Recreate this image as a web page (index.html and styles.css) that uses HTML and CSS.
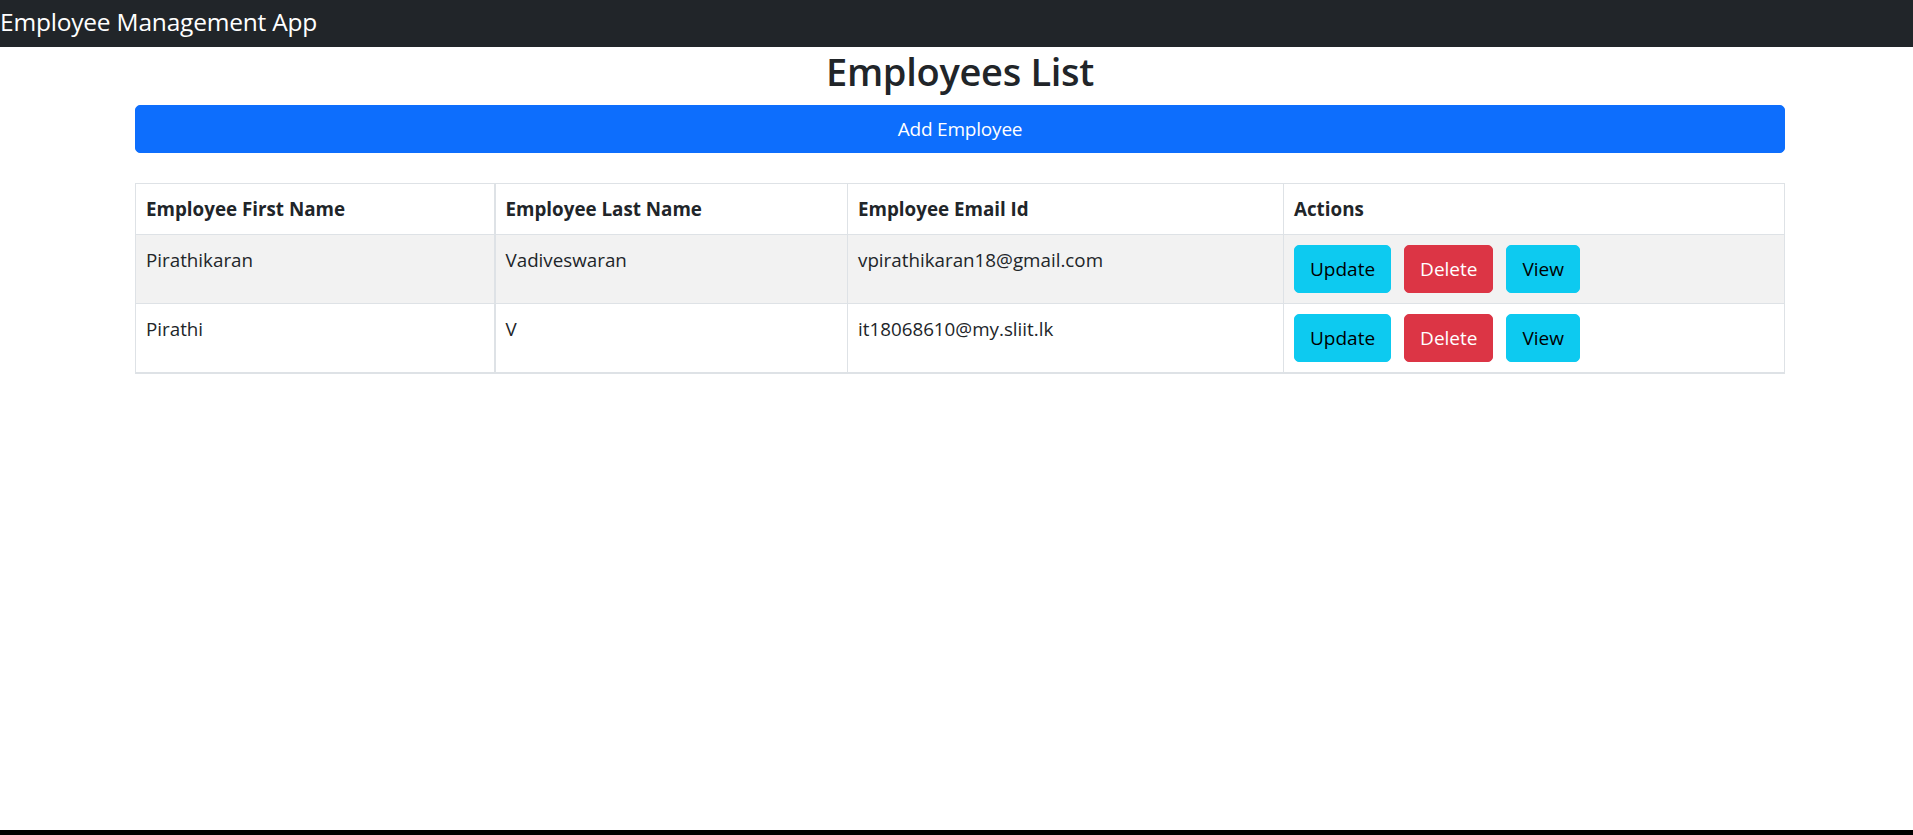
FILE: index.html
```html
<!DOCTYPE html>
<html lang="en">
<head>
<meta charset="utf-8">
<title>Employee Management App</title>
<link rel="stylesheet" href="styles.css">
</head>
<body>
<div class="page">
  <header class="navbar">
    <span class="brand">Employee Management App</span>
  </header>
  <main class="container">
    <h2 class="title">Employees List</h2>
    <button class="btn btn-primary btn-block">Add Employee</button>
    <table class="table">
      <thead>
        <tr>
          <th class="c1">Employee First Name</th>
          <th class="c2">Employee Last Name</th>
          <th class="c3">Employee Email Id</th>
          <th class="c4">Actions</th>
        </tr>
      </thead>
      <tbody>
        <tr class="striped">
          <td class="c1">Pirathikaran</td>
          <td class="c2">Vadiveswaran</td>
          <td class="c3">vpirathikaran18@gmail.com</td>
          <td class="c4">
            <div class="actions">
              <button class="btn btn-info">Update</button>
              <button class="btn btn-danger">Delete</button>
              <button class="btn btn-info">View</button>
            </div>
          </td>
        </tr>
        <tr>
          <td class="c1">Pirathi</td>
          <td class="c2">V</td>
          <td class="c3">it18068610@my.sliit.lk</td>
          <td class="c4">
            <div class="actions">
              <button class="btn btn-info">Update</button>
              <button class="btn btn-danger">Delete</button>
              <button class="btn btn-info">View</button>
            </div>
          </td>
        </tr>
      </tbody>
    </table>
  </main>
  <div class="bottom-bar"></div>
</div>
</body>
</html>
```

FILE: styles.css
```css
* { box-sizing: border-box; }

html, body {
  margin: 0;
  padding: 0;
}

body {
  font-family: "Open Sans", "Noto Sans", "Liberation Sans", sans-serif;
  font-size: 20px;
  line-height: 1.5;
  color: #212529;
  background: #fff;
}

.page {
  display: flex;
  flex-direction: column;
  min-height: 100vh;
}

.navbar {
  height: 47px;
  background: #212529;
  display: flex;
  align-items: center;
}

.brand {
  color: #fff;
  font-size: 24.5px;
  line-height: 1;
  letter-spacing: -0.2px;
  padding-bottom: 2px;
}

.container {
  width: 1650px;
  margin: 0 0 0 135px;
  display: flex;
  flex-direction: column;
}

.title {
  margin: 0 0 10px;
  font-size: 38px;
  line-height: 48px;
  font-weight: 600;
  text-align: center;
  letter-spacing: -0.3px;
}

.btn {
  font-family: inherit;
  font-size: 19px;
  line-height: 28px;
  padding: 10px 15px;
  border: 1px solid transparent;
  border-radius: 5px;
  cursor: pointer;
}

.btn-primary {
  background: #0d6efd;
  border-color: #0d6efd;
  color: #fff;
}

.btn-block {
  width: 100%;
  height: 48px;
  padding: 0;
  letter-spacing: -0.2px;
}

.btn-info {
  background: #0dcaf0;
  border-color: #0dcaf0;
  color: #000;
}

.btn-danger {
  background: #dc3545;
  border-color: #dc3545;
  color: #fff;
}

.table {
  margin-top: 30px;
  width: 100%;
  border-collapse: collapse;
  border: 1px solid #dee2e6;
  border-bottom: 2px solid #dee2e6;
}

.table th,
.table td {
  text-align: left;
  vertical-align: top;
  padding: 10px;
  border: 1px solid #dee2e6;
  font-size: 18.8px;
  line-height: 30px;
}

.table th {
  font-weight: 700;
}

.table .c1 { width: 359px; border-right-width: 2px; }
.table .c2 { width: 353px; }
.table .c3 { width: 436px; }
.table .c4 { width: 501px; }

.striped td {
  background: #f2f2f2;
}

.actions {
  display: flex;
  gap: 13px;
}

.actions .btn {
  height: 48px;
  padding: 0 15px;
}

.bottom-bar {
  margin-top: auto;
  height: 5px;
  background: #000;
}
```
